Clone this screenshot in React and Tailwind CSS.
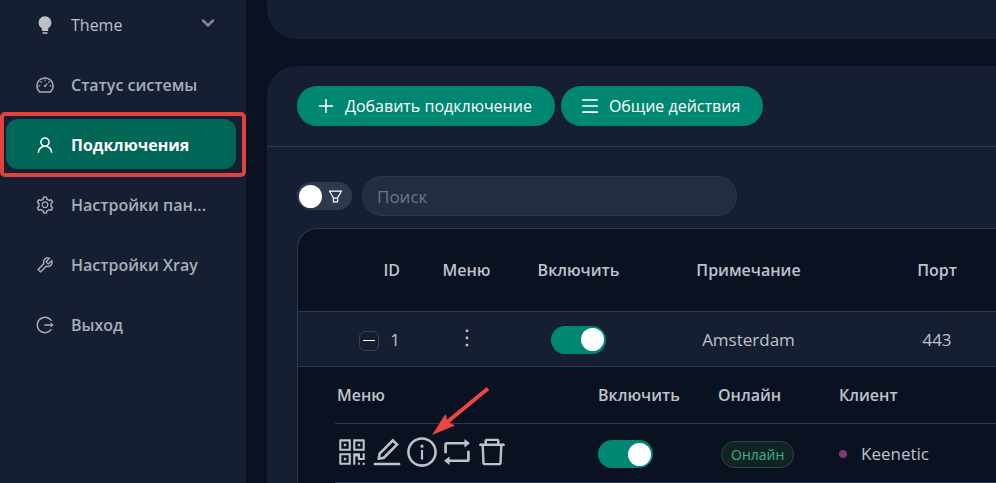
import { useState } from "react";
import { ChevronDown } from "lucide-react";
import {
  AiFillBulb,
  AiOutlineDashboard,
  AiOutlineUser,
  AiOutlineSetting,
  AiOutlineTool,
  AiOutlineLogout,
  AiOutlinePlus,
  AiOutlineMenu,
  AiOutlineFilter,
  AiOutlineQrcode,
  AiOutlineEdit,
  AiOutlineInfoCircle,
  AiOutlineRetweet,
  AiOutlineDelete,
  AiOutlineMore,
} from "react-icons/ai";

const links = [
  { label: "Статус системы", Icon: AiOutlineDashboard },
  { label: "Подключения", Icon: AiOutlineUser, active: true },
  { label: "Настройки пан...", Icon: AiOutlineSetting },
  { label: "Настройки Xray", Icon: AiOutlineTool },
  { label: "Выход", Icon: AiOutlineLogout },
];

function Sidebar() {
  return (
    <nav className="flex w-[246px] shrink-0 flex-col gap-[10px] bg-[#151f31] pr-[10px] pl-[6px] text-base">
      <button type="button" className="-mt-px flex h-[50px] items-center gap-4 pt-[2px] pl-[29px] text-[#bdc1c7]">
        <AiFillBulb className="size-5 shrink-0" />
        <span className="flex-1 text-left">Theme</span>
        <ChevronDown className="mr-[18px] mb-1 size-5 text-[#7f8693]" strokeWidth={3} />
      </button>
      {links.map(({ label, Icon, active }) => (
        <a
          key={label}
          href="#"
          className={
            active
              ? "relative flex h-[50px] items-center gap-4 rounded-xl bg-[#006655] pt-[2px] pr-5 pl-[29px] font-bold text-white"
              : "relative flex h-[50px] items-center gap-4 rounded-xl pt-[2px] pr-5 pl-[29px] font-semibold text-[#a9aeb6]"
          }
        >
          <Icon className="size-5 shrink-0" />
          <span className="whitespace-nowrap">{label}</span>
          {active && (
            <span className="absolute -top-[7px] -right-[10px] -bottom-2 -left-[6px] rounded-[5px] border-4 border-[#e34040]" />
          )}
        </a>
      ))}
    </nav>
  );
}

function Switch({ label }) {
  const [on, setOn] = useState(true);
  return (
    <label className="inline-flex h-7 w-[55px] cursor-pointer items-center rounded-full bg-[#2c3950] p-[2px] align-middle has-checked:justify-end has-checked:bg-[#008771]">
      <input type="checkbox" className="sr-only" aria-label={label} checked={on} onChange={() => setOn(!on)} />
      <span className="size-[23px] rounded-full bg-white" />
    </label>
  );
}

function FilterSwitch() {
  const [on, setOn] = useState(false);
  return (
    <label className="flex h-7 w-[55px] shrink-0 cursor-pointer items-center gap-[5px] rounded-full bg-[#2c3950] p-[2px]">
      <input type="checkbox" className="sr-only" aria-label="Фильтр" checked={on} onChange={() => setOn(!on)} />
      <span className="size-[23px] rounded-full bg-white" />
      <AiOutlineFilter className="size-[17px] text-white" />
    </label>
  );
}

function Arrow() {
  return (
    <svg viewBox="0 0 60 50" className="pointer-events-none absolute -top-[49px] left-[25px] h-[50px] w-[60px]" aria-hidden="true">
      <path d="M58 2.5 L16 37" stroke="#f04444" strokeWidth="4" />
      <path d="M2 49 L15.5 28 L17.5 35.5 L25 39.5 Z" fill="#f04444" />
    </svg>
  );
}

const actions = [
  { name: "QR", Icon: AiOutlineQrcode },
  { name: "Изменить", Icon: AiOutlineEdit },
  { name: "Информация", Icon: AiOutlineInfoCircle, marked: true },
  { name: "Сбросить трафик", Icon: AiOutlineRetweet },
  { name: "Удалить", Icon: AiOutlineDelete },
];

function ClientTable() {
  return (
    <table className="w-full table-fixed text-left">
      <colgroup>
        <col className="w-[263px]" />
        <col className="w-[120px]" />
        <col className="w-[121px]" />
        <col />
      </colgroup>
      <thead className="text-base">
        <tr className="h-[57px] border-b border-[#2c3950]">
          <th className="pl-[2px] font-semibold">Меню</th>
          <th className="font-semibold">Включить</th>
          <th className="font-semibold">Онлайн</th>
          <th className="font-semibold">Клиент</th>
        </tr>
      </thead>
      <tbody>
        <tr className="h-[59px] border-b border-[#2c3950] [&>td]:pt-[2px]">
          <td>
            <div className="flex gap-px pb-1">
              {actions.map(({ name, Icon, marked }) => (
                <button key={name} type="button" aria-label={name} className="relative">
                  <Icon className="size-[34px]" />
                  {marked && <Arrow />}
                </button>
              ))}
            </div>
          </td>
          <td>
            <Switch label="Включить клиента" />
          </td>
          <td>
            <span className="ml-[3px] inline-block rounded-full border border-[#274d47] bg-[#112421] px-[9px] text-sm leading-[25px] text-[#3cb08c]">
              Онлайн
            </span>
          </td>
          <td>
            <div className="flex items-center gap-[14px]">
              <span className="size-2 rounded-full bg-[#7a3a76]" />
              Keenetic
            </div>
          </td>
        </tr>
      </tbody>
    </table>
  );
}

function InboundTable() {
  return (
    <div className="mt-3 overflow-hidden rounded-tl-[20px] border-t border-l border-[#2c3950] bg-[#0a1222]">
      <table className="w-full min-w-[718px] table-fixed text-center text-[#bfc3c9]">
        <colgroup>
          <col className="w-[117px]" />
          <col className="w-[103px]" />
          <col className="w-[121px]" />
          <col />
          <col className="w-[158px]" />
        </colgroup>
        <thead className="text-base">
          <tr className="h-[82px] border-b border-[#2c3950]">
            <th className="pr-[15px] text-right font-semibold">ID</th>
            <th className="font-semibold">Меню</th>
            <th className="font-semibold">Включить</th>
            <th className="font-semibold">Примечание</th>
            <th className="font-semibold">Порт</th>
          </tr>
        </thead>
        <tbody>
          <tr className="h-[55px] border-b border-[#2c3950] bg-[#151f31] [&>td]:pt-[2px]">
            <td>
              <div className="flex items-center justify-end gap-[11px] pr-[15px]">
                <button
                  type="button"
                  aria-label="Свернуть"
                  className="mt-[2px] flex size-5 items-center justify-center rounded-md border border-[#3a4150]"
                >
                  <span className="h-px w-3 bg-white" />
                </button>
                1
              </div>
            </td>
            <td>
              <button type="button" aria-label="Меню" className="mb-1 align-middle">
                <AiOutlineMore className="size-[26px]" />
              </button>
            </td>
            <td>
              <Switch label="Включить" />
            </td>
            <td>Amsterdam</td>
            <td>443</td>
          </tr>
          <tr>
            <td colSpan={5} className="pl-[37px]">
              <ClientTable />
            </td>
          </tr>
        </tbody>
      </table>
    </div>
  );
}

export default function App() {
  return (
    <div className="flex min-h-screen overflow-hidden bg-[#0a1222] font-['Open_Sans','Noto_Sans',sans-serif] text-[17px] leading-6">
      <Sidebar />
      <main className="flex min-w-0 flex-1 flex-col pl-[21px]">
        <div className="mb-[27px] h-[39px] rounded-bl-[30px] bg-[#151f31]" />
        <section className="flex-1 rounded-tl-[30px] bg-[#151f31]">
          <div className="flex gap-[6px] border-b border-[#2c3950] py-5 pl-[30px] text-base font-medium">
            <button type="button" className="flex h-10 items-center gap-[9px] rounded-full bg-[#008771] pr-[23px] pl-[19px] text-white">
              <AiOutlinePlus className="size-5" />
              Добавить подключение
            </button>
            <button type="button" className="flex h-10 items-center gap-[9px] rounded-full bg-[#008771] pr-[23px] pl-[19px] text-white">
              <AiOutlineMenu className="size-5" />
              Общие действия
            </button>
          </div>
          <div className="pt-[29px] pl-[30px]">
            <div className="flex items-center gap-[10px]">
              <FilterSwitch />
              <input
                type="text"
                aria-label="Поиск"
                placeholder="Поиск"
                className="h-10 w-[375px] rounded-full border border-[#2c3950] bg-[#222d42] px-[14px] text-white outline-none placeholder:text-[#6f7785]"
              />
            </div>
            <InboundTable />
          </div>
        </section>
      </main>
    </div>
  );
}
